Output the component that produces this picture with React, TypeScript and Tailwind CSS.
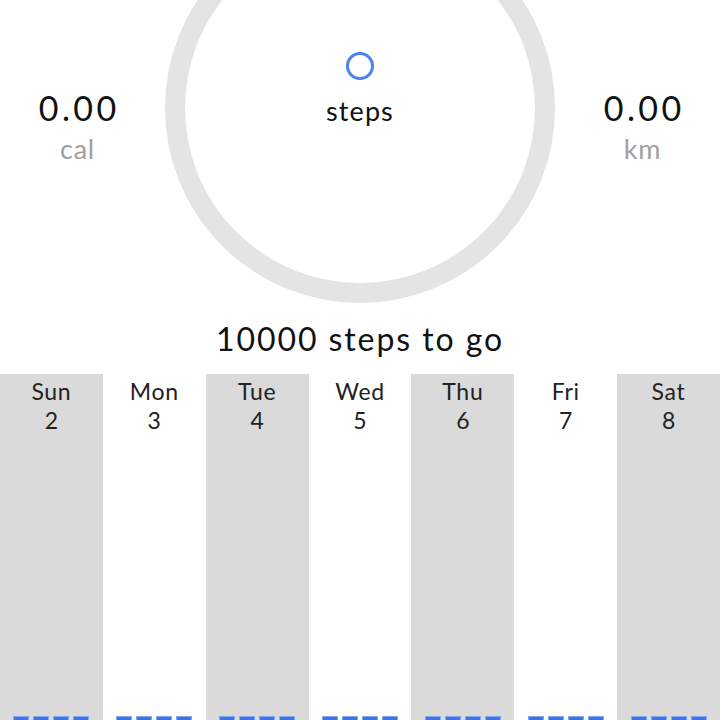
import React from "react";

const DAYS = [
  { name: "Sun", date: 2 },
  { name: "Mon", date: 3 },
  { name: "Tue", date: 4 },
  { name: "Wed", date: 5 },
  { name: "Thu", date: 6 },
  { name: "Fri", date: 7 },
  { name: "Sat", date: 8 },
];

function Stat({ value, unit }: { value: string; unit: string }) {
  return (
    <div className="w-[155px] shrink-0 flex flex-col items-center pt-[88px]">
      <div className="text-[34px] leading-[40px] tracking-[0.1em] pl-[0.1em] text-[#111]">{value}</div>
      <div className="mt-[4px] text-[27px] leading-[34px] tracking-[0.03em] text-[#a0a0a0]">{unit}</div>
    </div>
  );
}

export default function App() {
  return (
    <div
      className="h-[720px] w-[720px] overflow-hidden bg-white"
      style={{ fontFamily: "Lato, 'Noto Sans', sans-serif" }}
    >
      {/* Today */}
      <div className="flex gap-[10px] h-[303px]">
        <Stat value="0.00" unit="cal" />
        <div className="-mt-[87px] h-[390px] w-[390px] shrink-0 rounded-full border-[20px] border-[#e4e4e4] flex flex-col items-center pt-[119px]">
          <div className="h-[28px] w-[28px] rounded-full border-[3px] border-[#4a84ee]" />
          <div className="mt-[14px] text-[27px] leading-[34px] tracking-[0.04em] text-[#111]">steps</div>
        </div>
        <Stat value="0.00" unit="km" />
      </div>

      <div className="h-[71px] flex items-center justify-center text-[32px] tracking-[0.06em] text-[#111]">
        10000 steps to go
      </div>

      {/* Week */}
      <div className="grid grid-cols-7">
        {DAYS.map((d, i) => (
          <div
            key={d.name}
            className={`h-[358px] flex flex-col items-center pt-[3px] ${i % 2 === 0 ? "bg-[#dadada]" : "bg-white"}`}
          >
            <div className="text-[23px] leading-[29px] tracking-[0.03em] text-[#222]">{d.name}</div>
            <div className="text-[23px] leading-[29px] text-[#222]">{d.date}</div>
            <div className="mt-auto flex gap-[4px]">
              {[0, 1, 2, 3].map((k) => (
                <div key={k} className="h-[16px] w-[16px] bg-[#3f74e6] border border-[#86a7ee]" />
              ))}
            </div>
          </div>
        ))}
      </div>
    </div>
  );
}
